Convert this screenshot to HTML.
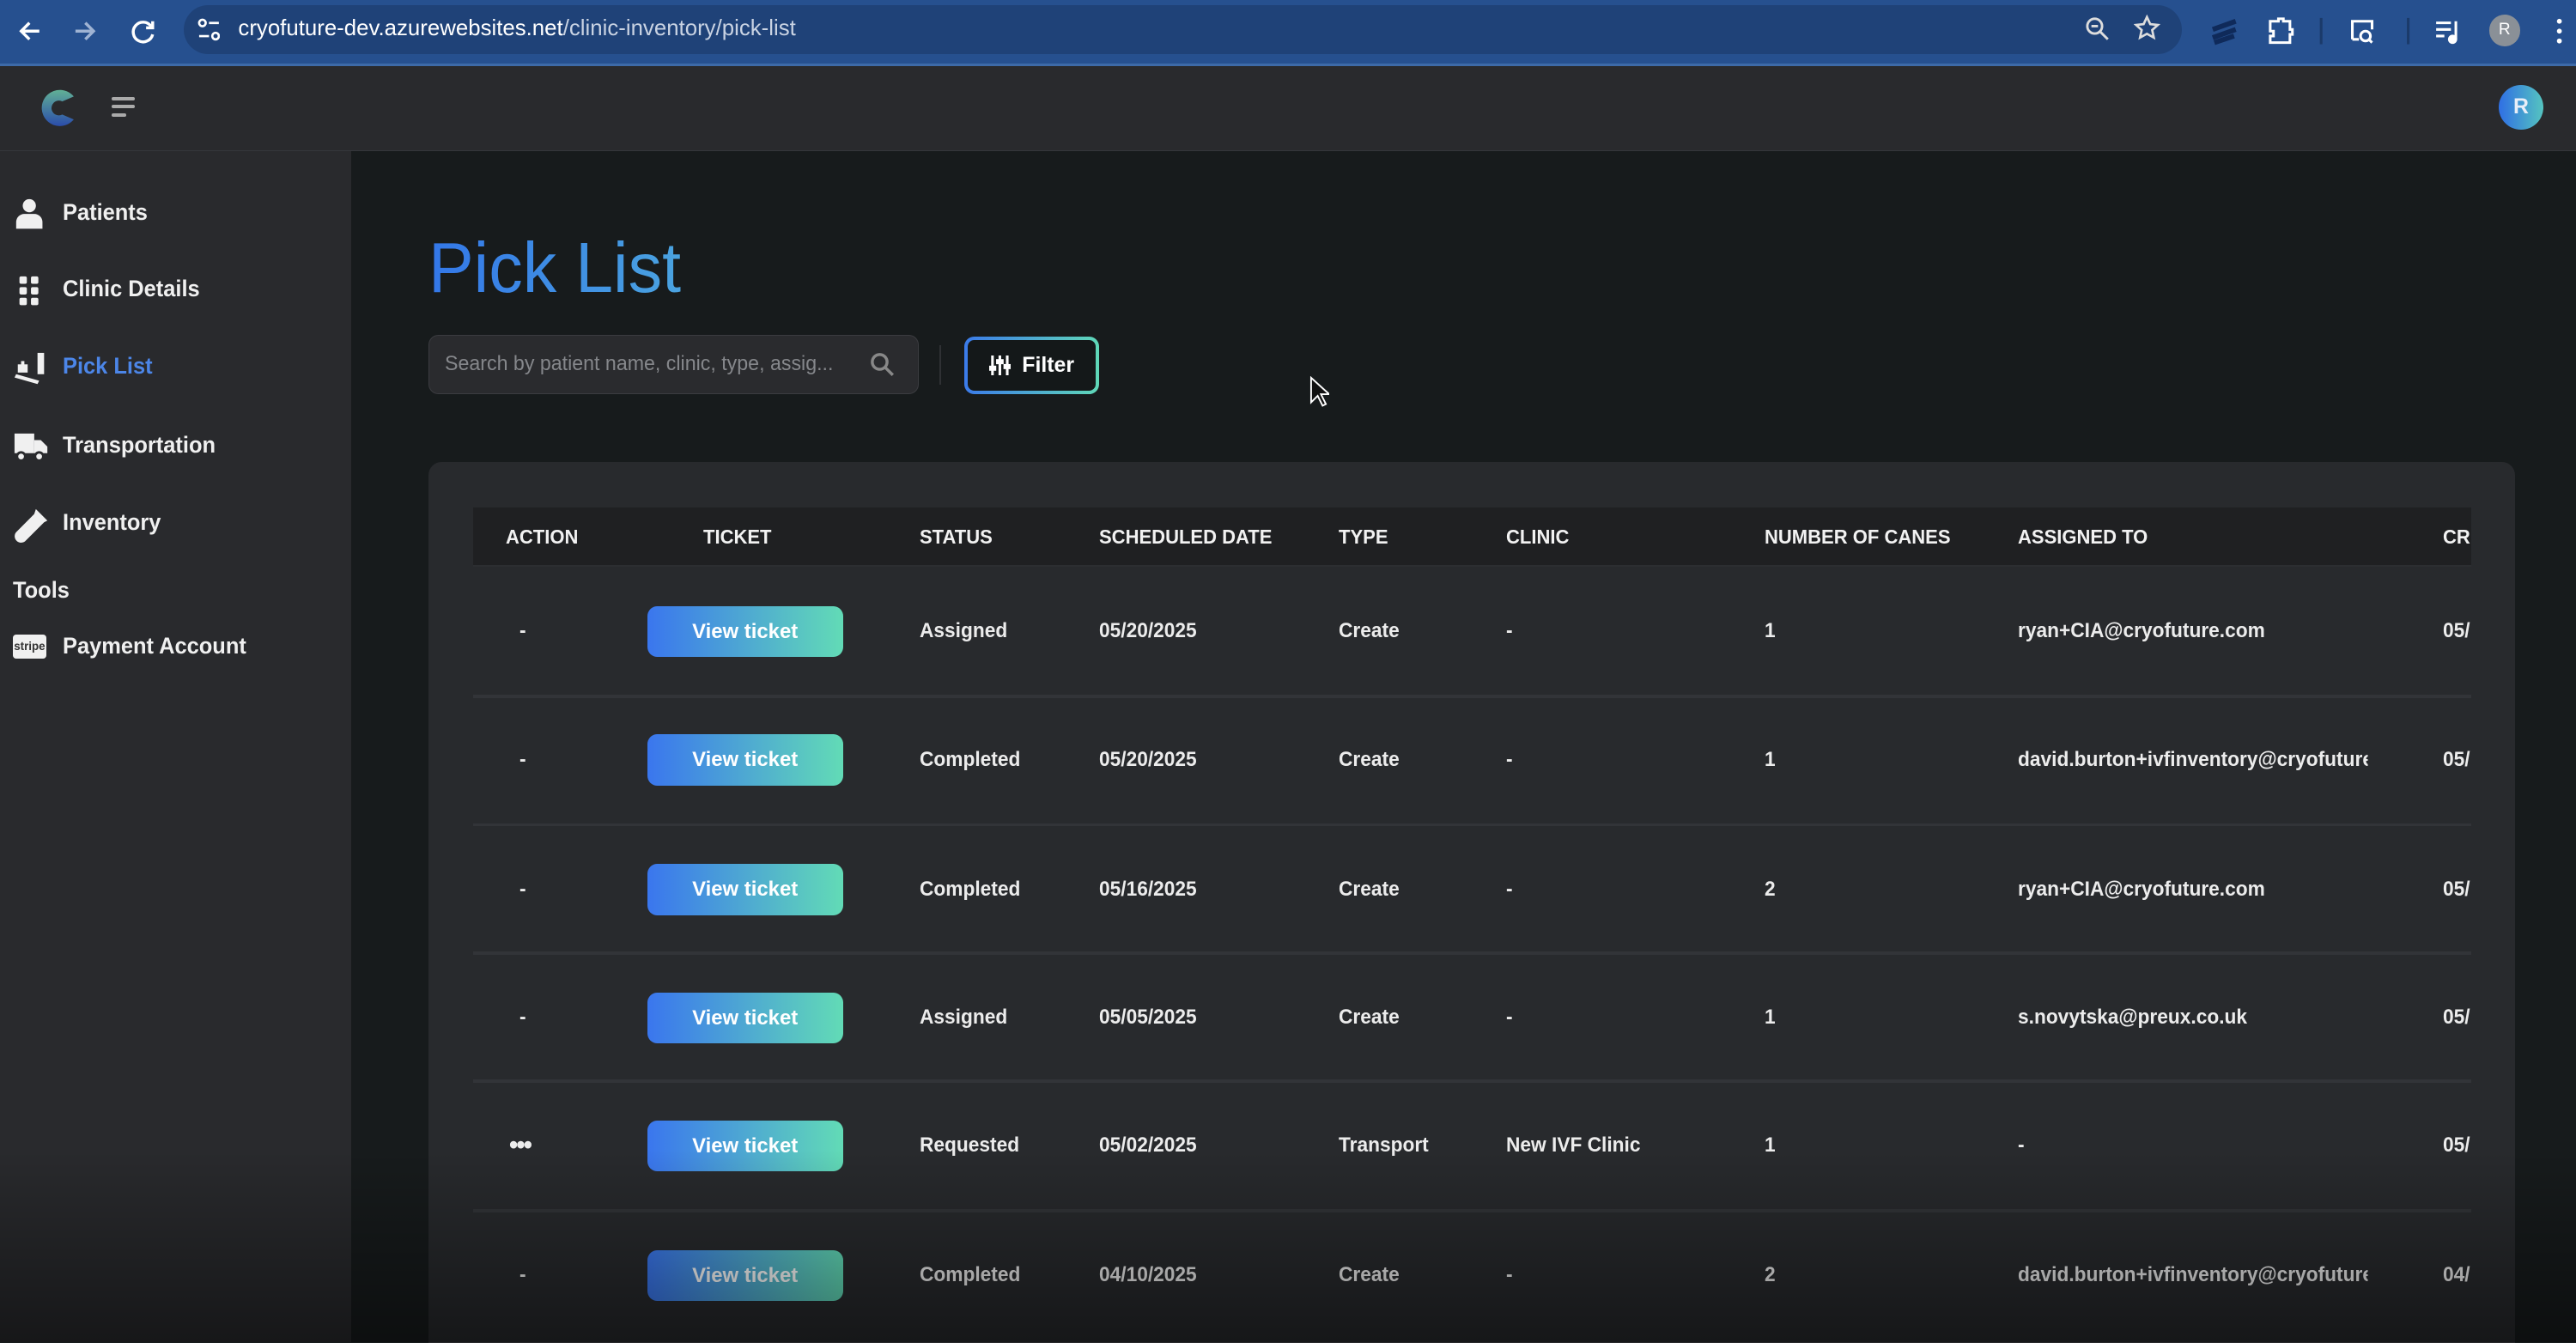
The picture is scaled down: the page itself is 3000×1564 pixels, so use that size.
<!DOCTYPE html>
<html><head><meta charset="utf-8">
<style>
html{zoom:1.9133;overflow:hidden;background:#171b1c}
*{box-sizing:border-box;margin:0;padding:0}
body{width:1568px;height:817px;overflow:hidden;background:#171b1c;font-family:"Liberation Sans",sans-serif;position:relative;color:#e6e6e6}
.abs{position:absolute}
.chrome{left:0;top:0;width:1568px;height:40px;background:#26508f;border-bottom:2px solid #3d6aa8}
.url{left:112px;top:3px;width:1216px;height:30px;border-radius:15px;background:#1f4278}
.url span{position:absolute;left:33px;top:7px;font-size:13.5px;color:#fff}
.url span i{font-style:normal;color:#c9d3e3}
.hdr{left:0;top:40px;width:1568px;height:52px;background:#292a2d;border-bottom:1px solid #35373b}
.side{left:0;top:92px;width:214px;height:725px;background:#292a2d}
.nav{position:absolute;left:38px;font-size:14px;font-weight:600;color:#f0f0f0;transform:scaleX(.95);transform-origin:left}
.ic{position:absolute;left:8px}
.title{left:261px;top:139px;font-size:43px;background:linear-gradient(90deg,#3377e8,#4aa3e0);-webkit-background-clip:text;color:transparent;transform:scaleX(.96);transform-origin:left}
.search{left:261px;top:204px;width:298px;height:36px;border:1px solid #3b3c40;border-radius:6px;background:#2a2b2e}
.search span{position:absolute;left:9px;top:10px;font-size:12.5px;color:#85878b;transform:scaleX(.97);transform-origin:left;white-space:nowrap}
.filter{left:587px;top:205px;width:82px;height:35px;border-radius:6px;padding:2px;background:linear-gradient(90deg,#3b7bea,#5fd8b8)}
.filter div{width:100%;height:100%;border-radius:4px;background:#141819;font-size:13px;font-weight:700;color:#fff;display:flex;align-items:center;justify-content:center;gap:7px}
.card{left:261px;top:281px;width:1270px;height:560px;background:#282a2d;border-radius:8px;overflow:hidden}
.th{left:288px;top:309px;width:1216px;height:36px;background:#1f2022}
.h{position:absolute;top:320px;font-size:12px;font-weight:700;color:#f2f2f2;transform:scaleX(.96);transform-origin:left;white-space:nowrap}
.c{position:absolute;font-size:12.5px;font-weight:600;color:#ececec;white-space:nowrap;transform:scaleX(.95);transform-origin:left}
.sep{position:absolute;left:288px;width:1216px;height:2px;background:#323438}
.btn{position:absolute;left:394px;width:119px;height:31px;border-radius:6px;background:linear-gradient(90deg,#3a76ee,#62dbb6);font-size:12.5px;font-weight:600;color:#fff;text-align:center;line-height:31px}
.fade{left:0;top:700px;width:1568px;height:117px;background:linear-gradient(180deg,rgba(0,0,0,0),rgba(0,0,0,.45))}
</style></head><body>
<div class="abs chrome"></div>
<svg class="abs" style="left:10px;top:10px" width="90" height="18" viewBox="0 0 90 18" fill="none" stroke="#fff" stroke-width="1.8">
<path d="M14 9H3M8 4L3 9l5 5"/><path d="M36 9h11M42 4l5 5-5 5" stroke="#9fb3d3"/><path d="M82 6a6 6 0 1 0 1 5M83 3v4h-4"/></svg>
<div class="abs url"><svg style="position:absolute;left:8px;top:8px" width="14" height="14" viewBox="0 0 14 14" fill="none" stroke="#fff" stroke-width="1.4"><circle cx="3" cy="3" r="2"/><path d="M7 3h6M1 11h6"/><circle cx="11" cy="11" r="2"/></svg><span>cryofuture-dev.azurewebsites.net<i>/clinic-inventory/pick-list</i></span>
<svg style="position:absolute;left:1157px;top:7px" width="16" height="16" viewBox="0 0 16 16" fill="none" stroke="#ddd" stroke-width="1.5"><circle cx="6" cy="6" r="4.5"/><path d="M9.5 9.5L14 14M4 6h4"/></svg>
<svg style="position:absolute;left:1187px;top:6px" width="16" height="16" viewBox="0 0 16 16" fill="none" stroke="#ddd" stroke-width="1.4"><path d="M8 1.5l2 4.3 4.6.5-3.4 3.1 1 4.6L8 11.7 3.8 14l1-4.6L1.4 6.3 6 5.8z"/></svg></div>
<svg class="abs" style="left:1346px;top:10px" width="220" height="18" viewBox="0 0 220 18" fill="none" stroke="#fff" stroke-width="1.6">
<path d="M1 8l14-5M1 13l14-5M2 16l12-4" stroke="#0f2a5a" stroke-width="3"/>
<path d="M36 3h5v-1.5h3V3h4v5h1.5v3H48v5H36v-4h2v-3h-2z"/>
<path d="M67 1v16" stroke="#1b3a6a"/>
<path d="M86 14V3h12v5M86 14h4" /><circle cx="94" cy="12" r="3"/><path d="M96 14l2 2"/>
<path d="M120 1v16" stroke="#1b3a6a"/>
<path d="M137 4h9M137 8h9M137 12h5M149 3v11"/><circle cx="147" cy="14" r="2" fill="#fff"/>
<path d="M212 3v0M212 9v0M212 15v0" stroke-width="3" stroke-linecap="round"/></svg>
<div class="abs" style="left:1515px;top:9px;width:19px;height:19px;border-radius:50%;background:#8a9097;color:#fff;font-size:10px;text-align:center;line-height:19px">R</div>
<div class="abs hdr"></div>
<svg class="abs" style="left:21px;top:52px" width="28" height="28" viewBox="0 0 28 28">
<defs><linearGradient id="lg" x1="0" y1="0" x2="0" y2="1"><stop offset="0" stop-color="#6fd1b0"/><stop offset="1" stop-color="#2b55c9"/></linearGradient></defs>
<path d="M24 7A11 11 0 1 0 24 21L17 18A4.5 4.5 0 1 1 17 10Z" fill="url(#lg)" opacity=".8"/></svg>
<div class="abs" style="left:68px;top:59px;width:14px;height:2px;background:#aaa;border-radius:1px"></div>
<div class="abs" style="left:68px;top:64px;width:14px;height:2px;background:#aaa;border-radius:1px"></div>
<div class="abs" style="left:68px;top:69px;width:9px;height:2px;background:#aaa;border-radius:1px"></div>
<div class="abs" style="left:1521px;top:52px;width:27px;height:27px;border-radius:50%;background:linear-gradient(90deg,#2f6fe4,#55c4c0);color:#e8eef8;font-size:13px;font-weight:700;text-align:center;line-height:27px">R</div>
<div class="abs side"></div>
<svg class="ic" style="top:120px" width="20" height="20" viewBox="0 0 20 20" fill="#f0f0f0"><circle cx="10" cy="5" r="4"/><path d="M2 19v-4a5 5 0 0 1 5-5h6a5 5 0 0 1 5 5v4z"/></svg>
<div class="nav" style="top:121px">Patients</div>
<svg class="ic" style="top:167px" width="20" height="20" viewBox="0 0 20 20" fill="#f0f0f0"><rect x="4" y="1" width="4.5" height="4.5" rx="1"/><rect x="11" y="1" width="4.5" height="4.5" rx="1"/><rect x="4" y="7.5" width="4.5" height="4.5" rx="1"/><rect x="11" y="7.5" width="4.5" height="4.5" rx="1"/><rect x="4" y="14" width="4.5" height="4.5" rx="1"/><rect x="11" y="14" width="4.5" height="4.5" rx="1"/></svg>
<div class="nav" style="top:168px">Clinic Details</div>
<svg class="ic" style="top:214px" width="22" height="20" viewBox="0 0 22 20" fill="#f0f0f0"><path d="M15 1h4v13h-4z"/><path d="M2 14l14 4-1 2L1 16z"/><rect x="3" y="8" width="6" height="5"/><path d="M5 6h2v3H5z"/></svg>
<div class="nav" style="top:215px;color:#4c86e8">Pick List</div>
<svg class="ic" style="top:262px" width="22" height="20" viewBox="0 0 22 20" fill="#f0f0f0"><path d="M1 2h12v12H1z"/><path d="M13 6h4l4 4v4h-8z"/><circle cx="5" cy="16" r="2.5" fill="#f0f0f0" stroke="#292a2d" stroke-width="1.5"/><circle cx="16" cy="16" r="2.5" fill="#f0f0f0" stroke="#292a2d" stroke-width="1.5"/></svg>
<div class="nav" style="top:263px">Transportation</div>
<svg class="ic" style="top:309px" width="22" height="22" viewBox="0 0 22 22" fill="#f0f0f0"><path d="M14 1l7 7-2 1L8 20a3.5 3.5 0 0 1-6-5L13 4z"/></svg>
<div class="nav" style="top:310px">Inventory</div>
<div class="nav" style="left:8px;top:351px">Tools</div>
<div class="abs" style="left:8px;top:386px;width:20px;height:15px;background:#f0f0f0;border-radius:2px;font-size:7px;color:#333;text-align:center;line-height:15px;font-weight:700">stripe</div>
<div class="nav" style="top:385px">Payment Account</div>
<div class="abs title">Pick List</div>
<div class="abs search"><span>Search by patient name, clinic, type, assig...</span>
<svg style="position:absolute;left:268px;top:10px" width="15" height="15" viewBox="0 0 15 15" fill="none" stroke="#888" stroke-width="1.8"><circle cx="6" cy="6" r="4.5"/><path d="M9.5 9.5L14 14"/></svg></div>
<div class="abs" style="left:572px;top:210px;width:1px;height:24px;background:#2f3134"></div>
<div class="abs filter"><div><svg width="13" height="12" viewBox="0 0 13 12" fill="#fff" stroke="#fff" stroke-width="1.6"><path d="M2 0v12M6.5 0v12M11 0v12" /><rect x="0.5" y="7" width="3" height="1.5"/><rect x="5" y="3" width="3" height="1.5"/><rect x="9.5" y="6" width="3" height="1.5"/></svg>Filter</div></div>
<svg class="abs" style="left:797px;top:229px" width="12" height="19" viewBox="0 0 12 19"><path d="M1 1v15l4-4 3 6 2-1-3-6h5z" fill="#111" stroke="#fff" stroke-width="1"/></svg>
<div class="abs card"></div>
<div class="abs th"></div>
<div class="h" style="left:308px">ACTION</div><div class="h" style="left:428px">TICKET</div><div class="h" style="left:560px">STATUS</div><div class="h" style="left:669px">SCHEDULED DATE</div><div class="h" style="left:815px">TYPE</div><div class="h" style="left:917px">CLINIC</div><div class="h" style="left:1074px">NUMBER OF CANES</div><div class="h" style="left:1228px">ASSIGNED TO</div><div class="h" style="left:1487px;width:17px;overflow:hidden">CR</div>
<div class="sep" style="top:344px;height:1px;background:#2c2e31"></div>
<div class="sep" style="top:423px"></div><div class="sep" style="top:501px"></div><div class="sep" style="top:579px"></div><div class="sep" style="top:657px"></div><div class="sep" style="top:736px"></div>

<div class="c" style="left:316px;top:377px">-</div><div class="btn" style="top:369px">View ticket</div><div class="c" style="left:560px;top:377px">Assigned</div><div class="c" style="left:669px;top:377px">05/20/2025</div><div class="c" style="left:815px;top:377px">Create</div><div class="c" style="left:917px;top:377px">-</div><div class="c" style="left:1074px;top:377px">1</div><div class="c" style="left:1228px;top:377px">ryan+CIA@cryofuture.com</div><div class="c" style="left:1487px;top:377px;width:18px;overflow:hidden">05/</div>

<div class="c" style="left:316px;top:455px">-</div><div class="btn" style="top:447px">View ticket</div><div class="c" style="left:560px;top:455px">Completed</div><div class="c" style="left:669px;top:455px">05/20/2025</div><div class="c" style="left:815px;top:455px">Create</div><div class="c" style="left:917px;top:455px">-</div><div class="c" style="left:1074px;top:455px">1</div><div class="c" style="left:1228px;top:455px;width:224px;overflow:hidden">david.burton+ivfinventory@cryofuture.com</div><div class="c" style="left:1487px;top:455px;width:18px;overflow:hidden">05/</div>

<div class="c" style="left:316px;top:534px">-</div><div class="btn" style="top:526px">View ticket</div><div class="c" style="left:560px;top:534px">Completed</div><div class="c" style="left:669px;top:534px">05/16/2025</div><div class="c" style="left:815px;top:534px">Create</div><div class="c" style="left:917px;top:534px">-</div><div class="c" style="left:1074px;top:534px">2</div><div class="c" style="left:1228px;top:534px">ryan+CIA@cryofuture.com</div><div class="c" style="left:1487px;top:534px;width:18px;overflow:hidden">05/</div>

<div class="c" style="left:316px;top:612px">-</div><div class="btn" style="top:604px">View ticket</div><div class="c" style="left:560px;top:612px">Assigned</div><div class="c" style="left:669px;top:612px">05/05/2025</div><div class="c" style="left:815px;top:612px">Create</div><div class="c" style="left:917px;top:612px">-</div><div class="c" style="left:1074px;top:612px">1</div><div class="c" style="left:1228px;top:612px">s.novytska@preux.co.uk</div><div class="c" style="left:1487px;top:612px;width:18px;overflow:hidden">05/</div>

<div class="c" style="left:310px;top:688px;font-size:16px;letter-spacing:-1px">•••</div><div class="btn" style="top:682px">View ticket</div><div class="c" style="left:560px;top:690px">Requested</div><div class="c" style="left:669px;top:690px">05/02/2025</div><div class="c" style="left:815px;top:690px">Transport</div><div class="c" style="left:917px;top:690px">New IVF Clinic</div><div class="c" style="left:1074px;top:690px">1</div><div class="c" style="left:1228px;top:690px">-</div><div class="c" style="left:1487px;top:690px;width:18px;overflow:hidden">05/</div>

<div class="c" style="left:316px;top:769px">-</div><div class="btn" style="top:761px">View ticket</div><div class="c" style="left:560px;top:769px">Completed</div><div class="c" style="left:669px;top:769px">04/10/2025</div><div class="c" style="left:815px;top:769px">Create</div><div class="c" style="left:917px;top:769px">-</div><div class="c" style="left:1074px;top:769px">2</div><div class="c" style="left:1228px;top:769px;width:224px;overflow:hidden">david.burton+ivfinventory@cryofuture.com</div><div class="c" style="left:1487px;top:769px;width:18px;overflow:hidden">04/</div>

<div class="abs fade"></div>
</body></html>
